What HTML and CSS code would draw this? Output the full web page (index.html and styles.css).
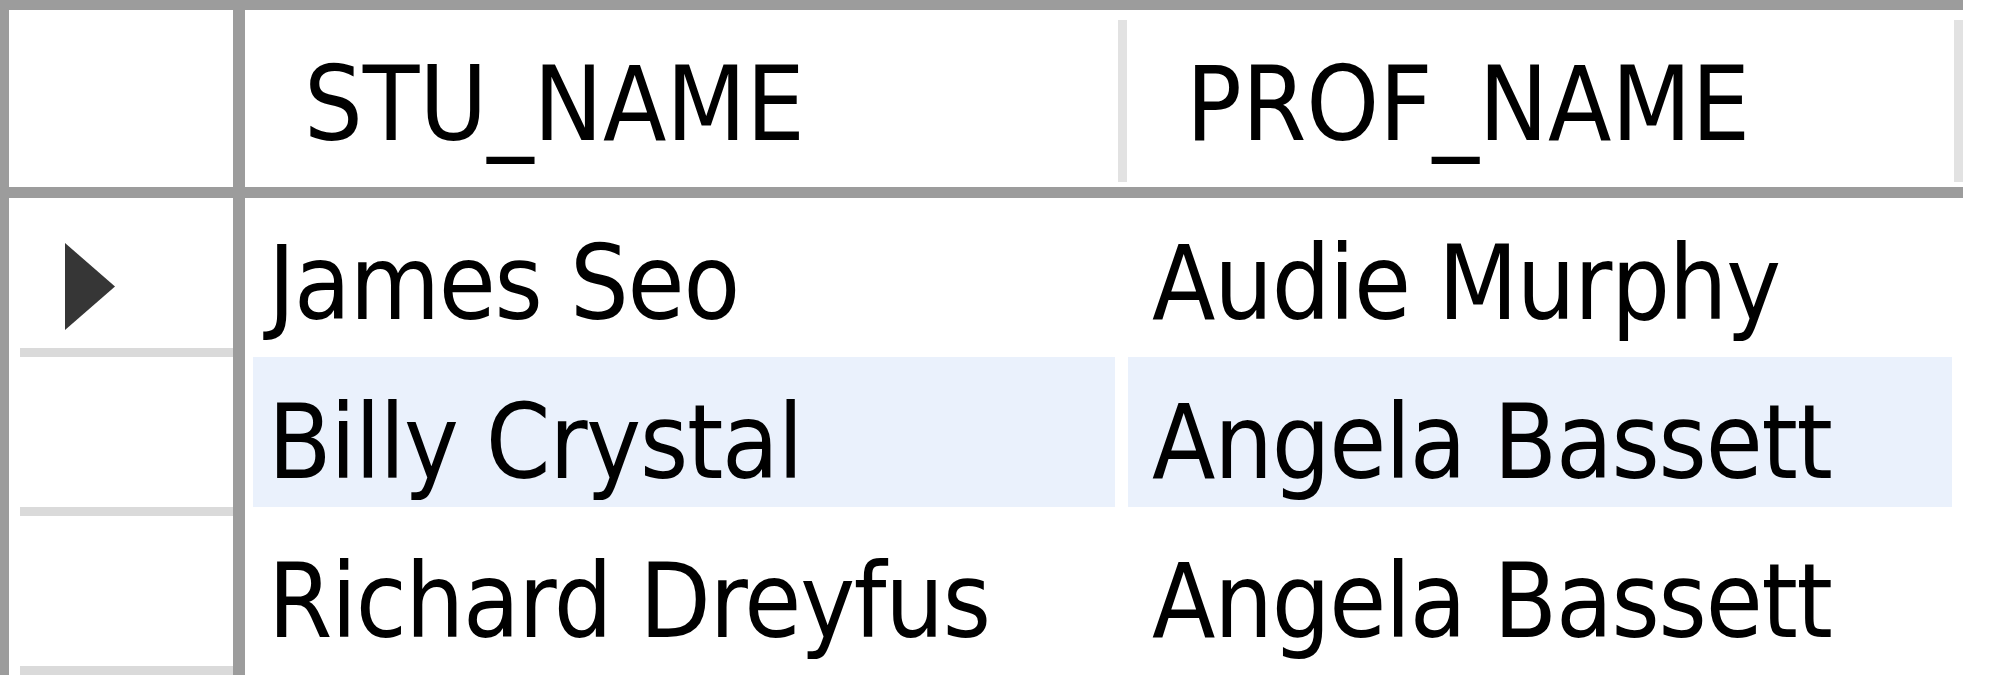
FILE: index.html
```html
<!DOCTYPE html>
<html>
<head>
<meta charset="utf-8">
<link rel="stylesheet" href="styles.css">
</head>
<body>
<div class="grid">
  <div class="head">
    <div class="corner"></div>
    <div class="vdiv"></div>
    <div class="hcell c1"><span>STU_NAME</span></div>
    <div class="hcell c2"><span>PROF_NAME</span></div>
  </div>
  <div class="body">
    <div class="rowheads">
      <div class="rh current">
        <svg class="arrow" width="50" height="87" viewBox="0 0 50 87"><polygon points="0,0 50,43.5 0,87" fill="#363636"/></svg>
      </div>
      <div class="rh"></div>
      <div class="rh"></div>
    </div>
    <div class="vdiv"></div>
    <div class="rows">
      <div class="row">
        <div class="cell c1"><div class="in">James Seo</div></div>
        <div class="cell c2"><div class="in">Audie Murphy</div></div>
      </div>
      <div class="row sel">
        <div class="cell c1"><div class="in">Billy Crystal</div></div>
        <div class="cell c2"><div class="in">Angela Bassett</div></div>
      </div>
      <div class="row">
        <div class="cell c1"><div class="in">Richard Dreyfus</div></div>
        <div class="cell c2"><div class="in">Angela Bassett</div></div>
      </div>
    </div>
  </div>
</div>
</body>
</html>
```

FILE: styles.css
```css
html, body {
  margin: 0;
  padding: 0;
  background: #ffffff;
}

.grid {
  width: 1954px;
  border-top: 10px solid #9c9c9c;
  border-left: 9px solid #9c9c9c;
  font-family: "DejaVu Sans Condensed", "DejaVu Sans", sans-serif;
  font-stretch: condensed;
  font-size: 103px;
  color: #000;
}

.head {
  display: flex;
  height: 177px;
  border-bottom: 11px solid #9c9c9c;
}

.corner {
  width: 224px;
  flex: none;
}

.vdiv {
  width: 12px;
  flex: none;
  background: #9c9c9c;
}

.hcell {
  flex: none;
  box-sizing: border-box;
  margin-top: 10px;
  margin-bottom: 5px;
  border-right: 9px solid #e2e2e2;
  line-height: 154px;
  padding-top: 7px;
}

.hcell.c1 {
  width: 882px;
  padding-left: 59px;
}

.hcell.c2 {
  width: 836px;
  padding-left: 59px;
}

.body {
  display: flex;
  height: 477px;
}

.rowheads {
  width: 224px;
  flex: none;
  display: flex;
  flex-direction: column;
}

.rh {
  height: 150px;
  margin-left: 11px;
  border-bottom: 9px solid #dadada;
  display: flex;
  align-items: flex-start;
}

.rh .arrow {
  margin-left: 45px;
  margin-top: 45px;
}

.rows {
  display: flex;
  flex-direction: column;
}

.row {
  display: flex;
  height: 159px;
}

.cell {
  flex: none;
  height: 150px;
  box-sizing: border-box;
}

.cell.c1 {
  width: 877px;
  padding: 0 7px 0 8px;
}

.cell.c2 {
  width: 841px;
  padding: 0 11px 0 6px;
}

.in {
  height: 150px;
  box-sizing: border-box;
  padding-top: 20px;
  line-height: 130px;
  white-space: nowrap;
  letter-spacing: -1.2px;
}

.c1 .in {
  padding-left: 15px;
}

.c2 .in {
  padding-left: 24px;
}

.sel .in {
  background: #eaf1fc;
}
```
